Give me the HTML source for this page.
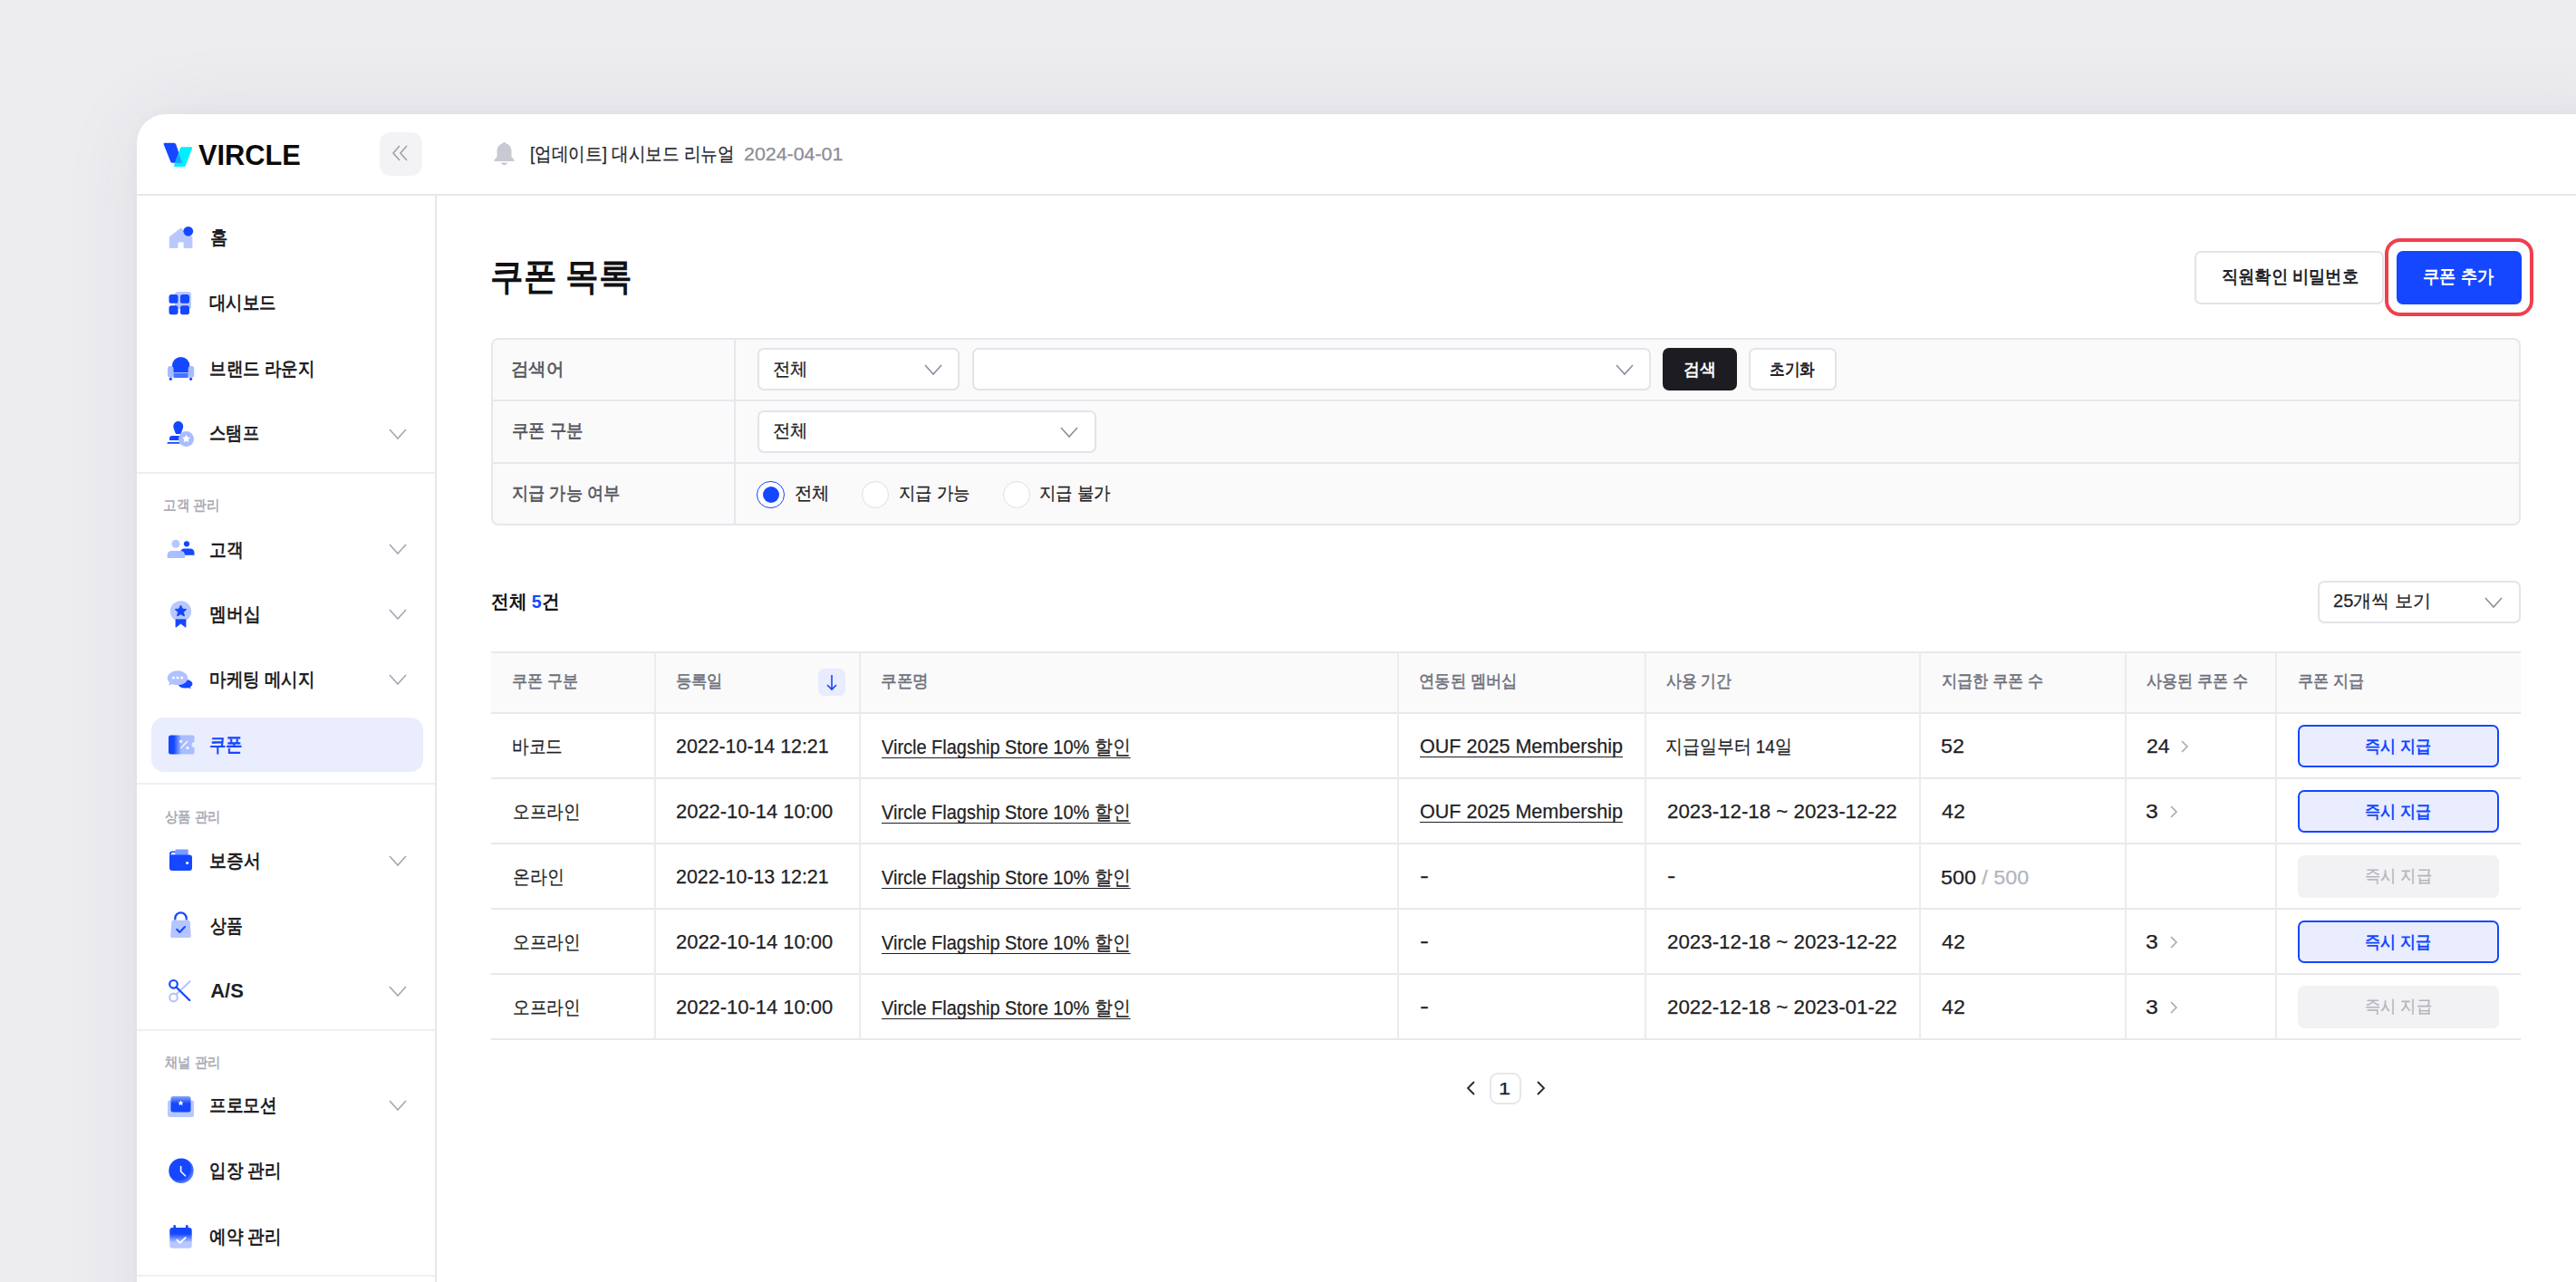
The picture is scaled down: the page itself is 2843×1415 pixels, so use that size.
<!DOCTYPE html><html><head><meta charset="utf-8"><style>html,body{margin:0;padding:0;}body{width:2843px;height:1415px;overflow:hidden;position:relative;background:#ededf0;font-family:"Liberation Sans",sans-serif;}.t{position:absolute;white-space:nowrap;line-height:1;transform-origin:0 0;}</style></head><body>
<div style="position:absolute;left:151px;top:125.5px;width:2760px;height:1400px;background:#fff;border-top-left-radius:32px;box-shadow:0 0 90px rgba(60,60,100,0.075), 0 0 16px rgba(60,60,100,0.03)"></div>
<div style="position:absolute;left:151px;top:213.5px;width:2700px;height:2px;background:#e7e7ed"></div>
<div style="position:absolute;left:479.5px;top:215px;width:2px;height:1210px;background:#e7e7ed"></div>
<div style="position:absolute;left:151px;top:521px;width:329px;height:2px;background:#efeff3"></div>
<div style="position:absolute;left:151px;top:864px;width:329px;height:2px;background:#efeff3"></div>
<div style="position:absolute;left:151px;top:1136px;width:329px;height:2px;background:#efeff3"></div>
<div style="position:absolute;left:151px;top:1407px;width:329px;height:2px;background:#efeff3"></div>
<div style="position:absolute;left:419px;top:145.5px;width:47px;height:48px;border-radius:12px;background:#f3f3f6"></div>
<svg style="position:absolute;left:430px;top:158px" width="24" height="24"><path d="M11 3 L4 11 L11 19 M19 3 L12 11 L19 19" fill="none" stroke="#9d9daa" stroke-width="1.5"/></svg>
<svg style="position:absolute;left:175px;top:150px" width="50" height="40" viewBox="0 0 50 40">
<path d="M6.8 7.8 L17 7.8 Q18.6 7.8 19.3 9.5 L26 29.7 L15 29.7 Q13.8 29.7 13.3 28.4 L5.6 9.3 Q5.2 7.8 6.8 7.8 Z" fill="#1447ff"/>
<path d="M25.8 12.3 L36 12.3 Q37.6 12.3 37 13.9 L29.8 32.8 Q29.4 34 28.2 34 L18 34 Q16.5 34 17 32.6 L23.6 14.2 Q24.3 12.3 25.8 12.3 Z" fill="#00efff"/>
<path d="M22.09 19.09 L26 29.7 L18.33 29.7 Z" fill="#1e9cff"/>
</svg>
<svg style="position:absolute;left:544px;top:156px" width="26" height="28" viewBox="0 0 26 28">
<path d="M12.5 1 C13.5 1 14 1.6 14 2.2 C18 3 20.5 6.5 20.5 11 L20.5 17 L23.5 20.5 C24 21.2 23.6 22 22.8 22 L2.2 22 C1.4 22 1 21.2 1.5 20.5 L4.5 17 L4.5 11 C4.5 6.5 7 3 11 2.2 C11 1.6 11.5 1 12.5 1 Z" fill="#c9c9d3"/>
<path d="M9 23.5 L16 23.5 C15.5 25.3 14.2 26.2 12.5 26.2 C10.8 26.2 9.5 25.3 9 23.5 Z" fill="#c9c9d3"/>
</svg>
<div style="position:absolute;left:166.5px;top:792px;width:300px;height:59.5px;border-radius:14px;background:#eaedfe"></div>
<svg style="position:absolute;left:428.4px;top:471.6px" width="22" height="14"><path d="M2 2 L11.0 12 L20 2" fill="none" stroke="#a5a5b5" stroke-width="1.6"/></svg>
<svg style="position:absolute;left:428.4px;top:599.4px" width="22" height="14"><path d="M2 2 L11.0 12 L20 2" fill="none" stroke="#a5a5b5" stroke-width="1.6"/></svg>
<svg style="position:absolute;left:428.4px;top:670.7px" width="22" height="14"><path d="M2 2 L11.0 12 L20 2" fill="none" stroke="#a5a5b5" stroke-width="1.6"/></svg>
<svg style="position:absolute;left:428.4px;top:743.0px" width="22" height="14"><path d="M2 2 L11.0 12 L20 2" fill="none" stroke="#a5a5b5" stroke-width="1.6"/></svg>
<svg style="position:absolute;left:428.4px;top:943.2px" width="22" height="14"><path d="M2 2 L11.0 12 L20 2" fill="none" stroke="#a5a5b5" stroke-width="1.6"/></svg>
<svg style="position:absolute;left:428.4px;top:1087.0px" width="22" height="14"><path d="M2 2 L11.0 12 L20 2" fill="none" stroke="#a5a5b5" stroke-width="1.6"/></svg>
<svg style="position:absolute;left:428.4px;top:1213.3px" width="22" height="14"><path d="M2 2 L11.0 12 L20 2" fill="none" stroke="#a5a5b5" stroke-width="1.6"/></svg>
<div style="position:absolute;left:2421.5px;top:276.5px;width:209px;height:59px;box-sizing:border-box;border:2px solid #e3e3e9;border-radius:7px;background:#fff"></div>
<div style="position:absolute;left:2631.5px;top:263px;width:164px;height:86px;box-sizing:border-box;border:4px solid #ef3f4e;border-radius:17px"></div>
<div style="position:absolute;left:2644.5px;top:276.5px;width:138px;height:59px;border-radius:7px;background:#1447ff"></div>
<div style="position:absolute;left:542px;top:373px;width:2240px;height:207px;box-sizing:border-box;border:2px solid #e7e7ed;border-radius:8px;background:#fafafb"></div>
<div style="position:absolute;left:543px;top:440.5px;width:2238px;height:2px;background:#e7e7ed"></div>
<div style="position:absolute;left:543px;top:509.5px;width:2238px;height:2px;background:#e7e7ed"></div>
<div style="position:absolute;left:809.5px;top:374px;width:2px;height:205px;background:#e7e7ed"></div>
<div style="position:absolute;left:835.8px;top:384.4px;width:223.60000000000014px;height:46.60000000000002px;box-sizing:border-box;border:2px solid #e3e3e9;border-radius:7px;background:#fff"></div>
<svg style="position:absolute;left:1019.0px;top:400.7px" width="22" height="14"><path d="M2 2 L11.0 12 L20 2" fill="none" stroke="#8e8e9c" stroke-width="1.6"/></svg>
<div style="position:absolute;left:1072.8px;top:384.4px;width:749.2px;height:46.60000000000002px;box-sizing:border-box;border:2px solid #e3e3e9;border-radius:7px;background:#fff"></div>
<svg style="position:absolute;left:1781.5px;top:400.7px" width="22" height="14"><path d="M2 2 L11.0 12 L20 2" fill="none" stroke="#8e8e9c" stroke-width="1.6"/></svg>
<div style="position:absolute;left:1834.5px;top:384.4px;width:82.29999999999995px;height:46.60000000000002px;box-sizing:border-box;border:2px solid #1c1c21;border-radius:7px;background:#1c1c21"></div>
<div style="position:absolute;left:1929.6px;top:384.4px;width:97.80000000000018px;height:46.60000000000002px;box-sizing:border-box;border:2px solid #e3e3e9;border-radius:7px;background:#fff"></div>
<div style="position:absolute;left:835.8px;top:453.4px;width:374.0px;height:46.400000000000034px;box-sizing:border-box;border:2px solid #e3e3e9;border-radius:7px;background:#fff"></div>
<svg style="position:absolute;left:1169.4px;top:469.6px" width="22" height="14"><path d="M2 2 L11.0 12 L20 2" fill="none" stroke="#8e8e9c" stroke-width="1.6"/></svg>
<div style="position:absolute;left:835.4px;top:530.7px;width:30.2px;height:30.2px;box-sizing:border-box;border:1.5px solid #1447ff;border-radius:50%;background:#fff"></div>
<div style="position:absolute;left:841.5px;top:536.8px;width:18px;height:18px;border-radius:50%;background:#1447ff"></div>
<div style="position:absolute;left:950.6999999999999px;top:530.7px;width:30.2px;height:30.2px;box-sizing:border-box;border:1.5px solid #dedee6;border-radius:50%;background:#fff"></div>
<div style="position:absolute;left:1106.6000000000001px;top:530.7px;width:30.2px;height:30.2px;box-sizing:border-box;border:1.5px solid #dedee6;border-radius:50%;background:#fff"></div>
<div style="position:absolute;left:2558px;top:641px;width:223.69999999999982px;height:47px;box-sizing:border-box;border:2px solid #e3e3e9;border-radius:7px;background:#fff"></div>
<svg style="position:absolute;left:2741.0px;top:657.5px" width="22" height="14"><path d="M2 2 L11.0 12 L20 2" fill="none" stroke="#8e8e9c" stroke-width="1.6"/></svg>
<div style="position:absolute;left:542px;top:719px;width:2240px;height:67.5px;background:#fafafb"></div>
<div style="position:absolute;left:542px;top:718.5px;width:2240px;height:2px;background:#e8e8ee"></div>
<div style="position:absolute;left:542px;top:785.5px;width:2240px;height:2px;background:#e8e8ee"></div>
<div style="position:absolute;left:542px;top:857.5px;width:2240px;height:2px;background:#e8e8ee"></div>
<div style="position:absolute;left:542px;top:929.5px;width:2240px;height:2px;background:#e8e8ee"></div>
<div style="position:absolute;left:542px;top:1001.5px;width:2240px;height:2px;background:#e8e8ee"></div>
<div style="position:absolute;left:542px;top:1073.5px;width:2240px;height:2px;background:#e8e8ee"></div>
<div style="position:absolute;left:542px;top:1145.5px;width:2240px;height:2px;background:#e8e8ee"></div>
<div style="position:absolute;left:721.5px;top:719px;width:2px;height:428px;background:#ebebf0"></div>
<div style="position:absolute;left:947.5px;top:719px;width:2px;height:428px;background:#ebebf0"></div>
<div style="position:absolute;left:1542px;top:719px;width:2px;height:428px;background:#ebebf0"></div>
<div style="position:absolute;left:1815px;top:719px;width:2px;height:428px;background:#ebebf0"></div>
<div style="position:absolute;left:2117.5px;top:719px;width:2px;height:428px;background:#ebebf0"></div>
<div style="position:absolute;left:2344.5px;top:719px;width:2px;height:428px;background:#ebebf0"></div>
<div style="position:absolute;left:2510.5px;top:719px;width:2px;height:428px;background:#ebebf0"></div>
<div style="position:absolute;left:903.3px;top:738.3px;width:29.4px;height:29.5px;border-radius:7px;background:#e8ecfe"></div>
<svg style="position:absolute;left:908px;top:742px" width="20" height="22"><path d="M10 3 L10 19 M5 14 L10 19 L15 14" fill="none" stroke="#1447ff" stroke-width="1.6"/></svg>
<div style="position:absolute;left:2536.4px;top:799.8px;width:221.5999999999999px;height:46.90000000000009px;box-sizing:border-box;border:2px solid #1447ff;border-radius:7px;background:#e9edfe"></div>
<div style="position:absolute;left:2536.4px;top:871.8px;width:221.5999999999999px;height:46.90000000000009px;box-sizing:border-box;border:2px solid #1447ff;border-radius:7px;background:#e9edfe"></div>
<div style="position:absolute;left:2536.4px;top:943.8px;width:221.5999999999999px;height:46.90000000000009px;box-sizing:border-box;border:2px solid #f2f2f5;border-radius:7px;background:#f2f2f5"></div>
<div style="position:absolute;left:2536.4px;top:1015.8px;width:221.5999999999999px;height:46.90000000000009px;box-sizing:border-box;border:2px solid #1447ff;border-radius:7px;background:#e9edfe"></div>
<div style="position:absolute;left:2536.4px;top:1087.8px;width:221.5999999999999px;height:46.90000000000009px;box-sizing:border-box;border:2px solid #f2f2f5;border-radius:7px;background:#f2f2f5"></div>
<svg style="position:absolute;left:2404.8px;top:815.5px" width="14" height="16"><path d="M3 2 L9 8 L3 14" fill="none" stroke="#a5a5b5" stroke-width="1.5"/></svg>
<svg style="position:absolute;left:2393px;top:887.5px" width="14" height="16"><path d="M3 2 L9 8 L3 14" fill="none" stroke="#a5a5b5" stroke-width="1.5"/></svg>
<svg style="position:absolute;left:2393px;top:1031.5px" width="14" height="16"><path d="M3 2 L9 8 L3 14" fill="none" stroke="#a5a5b5" stroke-width="1.5"/></svg>
<svg style="position:absolute;left:2393px;top:1103.5px" width="14" height="16"><path d="M3 2 L9 8 L3 14" fill="none" stroke="#a5a5b5" stroke-width="1.5"/></svg>
<div style="position:absolute;left:1644.3px;top:1183.7px;width:35.200000000000045px;height:35.59999999999991px;box-sizing:border-box;border:2px solid #e6e6ec;border-radius:9px;background:#fff"></div>
<svg style="position:absolute;left:1616px;top:1192px" width="14" height="18"><path d="M11 2 L4 9 L11 16" fill="none" stroke="#26262c" stroke-width="1.8"/></svg>
<svg style="position:absolute;left:1694px;top:1192px" width="14" height="18"><path d="M3 2 L10 9 L3 16" fill="none" stroke="#26262c" stroke-width="1.8"/></svg>
<svg style="position:absolute;left:180px;top:240px" width="40" height="40" viewBox="0 0 40 40"><path d="M7.2 21.5 L19.5 12 L32 21.5 L32 33.5 L23 33.5 L23 28 Q23 27 22 27 L17 27 Q16 27 16 28 L16 33.5 L7.2 33.5 Z" fill="#b8c8ff" stroke="#b8c8ff" stroke-width="0.8" stroke-linejoin="round"/><circle cx="27.8" cy="15.3" r="5.4" fill="#1447ff"/></svg>
<svg style="position:absolute;left:180px;top:315px" width="40" height="40" viewBox="0 0 40 40"><rect x="13" y="7" width="18" height="19" rx="3" fill="#b8c8ff"/><rect x="6.5" y="10" width="10" height="9.8" rx="2.6" fill="#1447ff"/><rect x="19" y="10" width="10" height="9.8" rx="2.6" fill="#1447ff"/><rect x="6.5" y="22.3" width="10" height="9.9" rx="2.6" fill="#1447ff"/><rect x="19" y="22.3" width="10" height="9.9" rx="2.6" fill="#1447ff"/></svg>
<svg style="position:absolute;left:180px;top:387px" width="40" height="40" viewBox="0 0 40 40"><path d="M10 24 L10 16.5 A9.65 9.5 0 0 1 29.3 16.5 L29.3 24 Z" fill="#1447ff"/><rect x="5" y="17" width="6.5" height="13" rx="3" fill="#a8bbff"/><rect x="27.7" y="17" width="6.5" height="13" rx="3" fill="#a8bbff"/><rect x="11.5" y="24.5" width="16.2" height="5.5" fill="#4672ff"/><circle cx="8.3" cy="31.3" r="1.6" fill="#1447ff"/><circle cx="30.6" cy="31.3" r="1.6" fill="#1447ff"/></svg>
<svg style="position:absolute;left:180px;top:458px" width="40" height="40" viewBox="0 0 40 40"><path d="M16.7 7 C20 7 22.2 9.5 22.2 12.5 C22.2 15 20.5 18 19.5 21 L14 21 C13 18 11.3 15 11.3 12.5 C11.3 9.5 13.5 7 16.7 7 Z" fill="#1447ff"/><path d="M7 28 L7 26 Q7 23 10 23 L18 23 L18 28 Z" fill="#1447ff"/><rect x="4.5" y="30" width="14" height="1.8" rx="0.9" fill="#1447ff"/><circle cx="25.5" cy="26.5" r="8.5" fill="#a9bcff"/><path d="M25.5 21.8 L26.9 24.6 L30 25 L27.8 27.1 L28.3 30.2 L25.5 28.7 L22.7 30.2 L23.2 27.1 L21 25 L24.1 24.6 Z" fill="#fff"/></svg>
<svg style="position:absolute;left:180px;top:586px" width="40" height="40" viewBox="0 0 40 40"><circle cx="14" cy="14.2" r="4.5" fill="#b8c8ff"/><circle cx="26" cy="14.3" r="3.1" fill="#1447ff"/><path d="M19 26.8 L19 24 Q19 19.5 24 19.5 L29.5 19.5 Q34.5 19.5 34.5 24.5 L34.5 26.8 Z" fill="#1447ff"/><path d="M4.7 30 L4.7 27 Q4.7 22 10 22 L19 22 Q24 22 24 27 L24 30 Z" fill="#aabdff"/></svg>
<svg style="position:absolute;left:180px;top:658px" width="40" height="40" viewBox="0 0 40 40"><circle cx="19.5" cy="16.8" r="11.6" fill="#b8c8ff"/><path d="M19.5 10 L21.4 14.1 L25.8 14.6 L22.5 17.6 L23.4 22 L19.5 19.8 L15.6 22 L16.5 17.6 L13.2 14.6 L17.6 14.1 Z" fill="#1447ff" stroke="#1447ff" stroke-width="1" stroke-linejoin="round"/><path d="M14 25.8 L25 25.8 L25 34.3 L19.5 30.3 L14 34.3 Z" fill="#1447ff" stroke="#1447ff" stroke-width="0.8" stroke-linejoin="round"/></svg>
<svg style="position:absolute;left:180px;top:730px" width="40" height="40" viewBox="0 0 40 40"><ellipse cx="24.5" cy="24.8" rx="8" ry="4.8" fill="#1447ff"/><path d="M29 27.5 L31 30 L27 29 Z" fill="#1447ff"/><ellipse cx="16" cy="18.3" rx="11.2" ry="8" fill="#b0c2ff"/><path d="M7.5 22.5 L6.3 26.8 L11 24.5 Z" fill="#b0c2ff"/><circle cx="11.5" cy="18" r="1.5" fill="#fff"/><circle cx="16" cy="18" r="1.5" fill="#fff"/><circle cx="20.7" cy="18" r="1.5" fill="#fff"/></svg>
<svg style="position:absolute;left:180px;top:802px" width="40" height="40" viewBox="0 0 40 40"><defs><linearGradient id="cg" x1="0" x2="1"><stop offset="0.2" stop-color="#1447ff"/><stop offset="0.5" stop-color="#a8bcff"/><stop offset="1" stop-color="#aabdff"/></linearGradient></defs><path d="M8.5 9.5 L32.5 9.5 Q34.5 9.5 34.5 11.5 L34.5 17 A3 3 0 0 0 34.5 23 L34.5 28.5 Q34.5 30.5 32.5 30.5 L8.5 30.5 Q6 30.5 6 28 L6 12 Q6 9.5 8.5 9.5 Z" fill="url(#cg)"/><circle cx="19.5" cy="16.2" r="1.5" fill="#fff"/><circle cx="27" cy="23.6" r="1.5" fill="#fff"/><path d="M19.6 23.6 L26.8 16.2" stroke="#fff" stroke-width="1.3" stroke-linecap="round"/></svg>
<svg style="position:absolute;left:180px;top:930px" width="40" height="40" viewBox="0 0 40 40"><rect x="13.5" y="7.5" width="14.2" height="7" fill="#7a9bff"/><path d="M7 12.5 Q7 9.5 10 9.5 L13.5 9.5 L13.5 13.5 L7 13.5 Z" fill="#1447ff"/><rect x="8.8" y="11" width="4.7" height="2.2" rx="1" fill="#fff"/><path d="M7 12.5 L7 28 Q7 31 10 31 L29 31 Q32 31 32 28 L32 16.5 Q32 13.5 29 13.5 L7 13.5 Z" fill="#1447ff"/><circle cx="26.6" cy="22.5" r="1.6" fill="#fff"/></svg>
<svg style="position:absolute;left:180px;top:1002px" width="40" height="40" viewBox="0 0 40 40"><path d="M13.3 13.5 L13.3 11.5 A6.2 6.2 0 0 1 25.7 11.5 L25.7 13.5" fill="none" stroke="#1447ff" stroke-width="2.2"/><path d="M11.5 13.7 L27.7 13.7 Q29.6 13.7 29.7 15.6 L30.8 31 Q30.9 33 28.9 33 L10.1 33 Q8.1 33 8.2 31 L9.4 15.6 Q9.5 13.7 11.5 13.7 Z" fill="#b4c5ff"/><path d="M15.2 23.8 L18.3 27 L24 21" fill="none" stroke="#1447ff" stroke-width="2" stroke-linecap="round" stroke-linejoin="round"/></svg>
<svg style="position:absolute;left:180px;top:1074px" width="40" height="40" viewBox="0 0 40 40"><path d="M29.5 9.3 L15 23" stroke="#b4c5ff" stroke-width="2.2" stroke-linecap="round"/><circle cx="11.5" cy="27" r="4.3" fill="none" stroke="#b4c5ff" stroke-width="2.2"/><circle cx="11.5" cy="12.3" r="4.3" fill="none" stroke="#1447ff" stroke-width="2.2"/><path d="M14.5 15.5 L29.2 30" stroke="#1447ff" stroke-width="2.3" stroke-linecap="round"/></svg>
<svg style="position:absolute;left:180px;top:1200px" width="40" height="40" viewBox="0 0 40 40"><defs><linearGradient id="pg" x1="0" y1="0" x2="0" y2="1"><stop offset="0" stop-color="#8ba6ff"/><stop offset="0.45" stop-color="#1447ff"/><stop offset="1" stop-color="#1447ff"/></linearGradient></defs><rect x="5" y="14.5" width="29" height="18.5" rx="2.2" fill="#b8c8ff"/><rect x="8.5" y="10" width="22" height="17.5" rx="2.5" fill="url(#pg)"/><path d="M19.5 14.5 L20.5 16.5 L22.6 16.7 L21 18.1 L21.5 20.2 L19.5 19.1 L17.5 20.2 L18 18.1 L16.4 16.7 L18.5 16.5 Z" fill="#fff"/></svg>
<svg style="position:absolute;left:180px;top:1272px" width="40" height="40" viewBox="0 0 40 40"><defs><radialGradient id="kg" cx="0.4" cy="0.4" r="0.75"><stop offset="0.6" stop-color="#1447ff"/><stop offset="1" stop-color="#9ab0ff"/></radialGradient></defs><circle cx="20" cy="20.3" r="13.7" fill="url(#kg)"/><path d="M19.6 15.6 L19.6 21 L24.5 25.8" fill="none" stroke="#fff" stroke-width="1.6" stroke-linecap="round" stroke-linejoin="round"/></svg>
<svg style="position:absolute;left:180px;top:1345px" width="40" height="40" viewBox="0 0 40 40"><defs><linearGradient id="lg" x1="0" y1="0" x2="0" y2="1"><stop offset="0.3" stop-color="#1447ff"/><stop offset="0.72" stop-color="#b8c8ff"/></linearGradient></defs><rect x="7.3" y="10" width="24.4" height="22.7" rx="3" fill="url(#lg)"/><rect x="11.4" y="7" width="2.6" height="4" rx="1.3" fill="#1447ff"/><rect x="25" y="7" width="2.6" height="4" rx="1.3" fill="#1447ff"/><path d="M15.2 23.5 L18.7 26.8 L24.8 21" fill="none" stroke="#fff" stroke-width="1.8" stroke-linecap="round" stroke-linejoin="round"/></svg>
<div id="t0" class="t" style="left:219.40px;top:156.00px;font-size:31px;font-weight:700;color:#0a0a0a;transform:scaleX(0.9929);">VIRCLE</div>
<div id="t1" class="t" style="left:584.79px;top:158.80px;font-size:21px;font-weight:400;color:#25252b;transform:scaleX(0.8864);-webkit-text-stroke:0.25px currentColor;">[업데이트] 대시보드 리뉴얼</div>
<div id="t2" class="t" style="left:821.23px;top:160.20px;font-size:20px;font-weight:400;color:#8c8c98;transform:scaleX(1.0695);-webkit-text-stroke:0.25px currentColor;">2024-04-01</div>
<div id="t3" class="t" style="left:232.27px;top:251.00px;font-size:21px;font-weight:700;color:#1f1f25;transform:scaleX(0.9218);">홈</div>
<div id="t4" class="t" style="left:231.35px;top:323.40px;font-size:21px;font-weight:700;color:#1f1f25;transform:scaleX(0.8780);">대시보드</div>
<div id="t5" class="t" style="left:231.34px;top:396.00px;font-size:21px;font-weight:700;color:#1f1f25;transform:scaleX(0.8836);">브랜드 라운지</div>
<div id="t6" class="t" style="left:231.36px;top:467.40px;font-size:21px;font-weight:700;color:#1f1f25;transform:scaleX(0.8692);">스탬프</div>
<div id="t7" class="t" style="left:231.32px;top:595.60px;font-size:21px;font-weight:700;color:#1f1f25;transform:scaleX(0.8974);">고객</div>
<div id="t8" class="t" style="left:231.41px;top:666.80px;font-size:21px;font-weight:700;color:#1f1f25;transform:scaleX(0.8969);">멤버십</div>
<div id="t9" class="t" style="left:231.34px;top:739.00px;font-size:21px;font-weight:700;color:#1f1f25;transform:scaleX(0.8836);">마케팅 메시지</div>
<div id="t10" class="t" style="left:231.35px;top:811.20px;font-size:21px;font-weight:700;color:#1447ff;transform:scaleX(0.8750);">쿠폰</div>
<div id="t11" class="t" style="left:231.32px;top:938.80px;font-size:21px;font-weight:700;color:#1f1f25;transform:scaleX(0.8983);">보증서</div>
<div id="t12" class="t" style="left:232.36px;top:1011.20px;font-size:21px;font-weight:700;color:#1f1f25;transform:scaleX(0.8507);">상품</div>
<div id="t13" class="t" style="left:232.20px;top:1083.00px;font-size:22px;font-weight:700;color:#1f1f25;transform:scaleX(1.0000);">A/S</div>
<div id="t14" class="t" style="left:231.33px;top:1209.20px;font-size:21px;font-weight:700;color:#1f1f25;transform:scaleX(0.8889);">프로모션</div>
<div id="t15" class="t" style="left:231.34px;top:1281.40px;font-size:21px;font-weight:700;color:#1f1f25;transform:scaleX(0.8837);">입장 관리</div>
<div id="t16" class="t" style="left:231.34px;top:1354.00px;font-size:21px;font-weight:700;color:#1f1f25;transform:scaleX(0.8837);">예약 관리</div>
<div id="t17" class="t" style="left:180.31px;top:550.40px;font-size:16px;font-weight:700;color:#acacb6;transform:scaleX(0.9093);">고객 관리</div>
<div id="t18" class="t" style="left:182.22px;top:894.20px;font-size:16px;font-weight:700;color:#acacb6;transform:scaleX(0.8955);">상품 관리</div>
<div id="t19" class="t" style="left:182.22px;top:1165.20px;font-size:16px;font-weight:700;color:#acacb6;transform:scaleX(0.8955);">채널 관리</div>
<div id="t20" class="t" style="left:540.77px;top:285.00px;font-size:41px;font-weight:700;color:#111114;transform:scaleX(0.8920);">쿠폰 목록</div>
<div id="t21" class="t" style="left:2451.65px;top:295.40px;font-size:20px;font-weight:700;color:#222228;transform:scaleX(0.9110);">직원확인 비밀번호</div>
<div id="t22" class="t" style="left:2674.30px;top:295.40px;font-size:20px;font-weight:700;color:#ffffff;transform:scaleX(0.9120);">쿠폰 추가</div>
<div id="t23" class="t" style="left:564.05px;top:396.60px;font-size:20px;font-weight:400;color:#55555d;transform:scaleX(0.9749);-webkit-text-stroke:0.6px #55555d">검색어</div>
<div id="t24" class="t" style="left:565.08px;top:465.20px;font-size:20px;font-weight:400;color:#55555d;transform:scaleX(0.9204);-webkit-text-stroke:0.6px #55555d">쿠폰 구분</div>
<div id="t25" class="t" style="left:565.17px;top:534.00px;font-size:20px;font-weight:400;color:#55555d;transform:scaleX(0.9102);-webkit-text-stroke:0.6px #55555d">지급 가능 여부</div>
<div id="t26" class="t" style="left:853.03px;top:396.60px;font-size:20px;font-weight:400;color:#1f1f25;transform:scaleX(0.9722);-webkit-text-stroke:0.25px currentColor;">전체</div>
<div id="t27" class="t" style="left:853.03px;top:465.20px;font-size:20px;font-weight:400;color:#1f1f25;transform:scaleX(0.9722);-webkit-text-stroke:0.25px currentColor;">전체</div>
<div id="t28" class="t" style="left:1858.06px;top:397.60px;font-size:19px;font-weight:700;color:#ffffff;transform:scaleX(0.9429);">검색</div>
<div id="t29" class="t" style="left:1952.57px;top:397.60px;font-size:19px;font-weight:700;color:#222228;transform:scaleX(0.8769);">초기화</div>
<div id="t30" class="t" style="left:876.84px;top:534.00px;font-size:20px;font-weight:400;color:#1f1f25;transform:scaleX(0.9722);-webkit-text-stroke:0.25px currentColor;">전체</div>
<div id="t31" class="t" style="left:991.94px;top:534.00px;font-size:20px;font-weight:400;color:#1f1f25;transform:scaleX(0.9205);-webkit-text-stroke:0.25px currentColor;">지급 가능</div>
<div id="t32" class="t" style="left:1147.36px;top:534.00px;font-size:20px;font-weight:400;color:#1f1f25;transform:scaleX(0.9218);-webkit-text-stroke:0.25px currentColor;">지급 불가</div>
<div id="t33" class="t" style="left:541.64px;top:653.00px;font-size:21px;font-weight:700;color:#111114;transform:scaleX(0.9359);">전체 <span style="color:#1447ff">5</span>건</div>
<div id="t34" class="t" style="left:2575.00px;top:653.00px;font-size:20px;font-weight:400;color:#1f1f25;transform:scaleX(1.0039);-webkit-text-stroke:0.25px currentColor;">25개씩 보기</div>
<div id="t35" class="t" style="left:565.10px;top:742.00px;font-size:19px;font-weight:400;color:#70727c;transform:scaleX(0.8987);-webkit-text-stroke:0.55px #70727c">쿠폰 구분</div>
<div id="t36" class="t" style="left:746.26px;top:742.00px;font-size:19px;font-weight:400;color:#70727c;transform:scaleX(0.9078);-webkit-text-stroke:0.55px #70727c">등록일</div>
<div id="t37" class="t" style="left:972.11px;top:742.00px;font-size:19px;font-weight:400;color:#70727c;transform:scaleX(0.9245);-webkit-text-stroke:0.55px #70727c">쿠폰명</div>
<div id="t38" class="t" style="left:1566.18px;top:742.00px;font-size:19px;font-weight:400;color:#70727c;transform:scaleX(0.9123);-webkit-text-stroke:0.55px #70727c">연동된 멤버십</div>
<div id="t39" class="t" style="left:1839.33px;top:742.00px;font-size:19px;font-weight:400;color:#70727c;transform:scaleX(0.8875);-webkit-text-stroke:0.55px #70727c">사용 기간</div>
<div id="t40" class="t" style="left:2142.62px;top:742.00px;font-size:19px;font-weight:400;color:#70727c;transform:scaleX(0.9009);-webkit-text-stroke:0.55px #70727c">지급한 쿠폰 수</div>
<div id="t41" class="t" style="left:2368.71px;top:742.00px;font-size:19px;font-weight:400;color:#70727c;transform:scaleX(0.9016);-webkit-text-stroke:0.55px #70727c">사용된 쿠폰 수</div>
<div id="t42" class="t" style="left:2535.65px;top:742.00px;font-size:19px;font-weight:400;color:#70727c;transform:scaleX(0.9002);-webkit-text-stroke:0.55px #70727c">쿠폰 지급</div>
<div id="t43" class="t" style="left:564.78px;top:813.00px;font-size:21px;font-weight:400;color:#1f1f25;transform:scaleX(0.8851);-webkit-text-stroke:0.25px currentColor;">바코드</div>
<div id="t44" class="t" style="left:746.04px;top:813.00px;font-size:22px;font-weight:400;color:#1f1f25;transform:scaleX(0.9708);-webkit-text-stroke:0.25px currentColor;">2022-10-14 12:21</div>
<div id="t45" class="t" style="left:973.04px;top:814.40px;font-size:22px;font-weight:400;color:#1f1f25;transform:scaleX(0.9071);-webkit-text-stroke:0.25px currentColor;text-decoration:underline;text-underline-offset:4px;text-decoration-thickness:1px">Vircle Flagship Store 10% 할인</div>
<div id="t46" class="t" style="left:1567.02px;top:813.40px;font-size:22px;font-weight:400;color:#1f1f25;transform:scaleX(0.9797);-webkit-text-stroke:0.25px currentColor;text-decoration:underline;text-underline-offset:4px;text-decoration-thickness:1px">OUF 2025 Membership</div>
<div id="t47" class="t" style="left:1838.42px;top:813.00px;font-size:21px;font-weight:400;color:#1f1f25;transform:scaleX(0.9000);-webkit-text-stroke:0.25px currentColor;">지급일부터 14일</div>
<div id="t48" class="t" style="left:2142.30px;top:813.00px;font-size:22px;font-weight:400;color:#1f1f25;transform:scaleX(1.0565);-webkit-text-stroke:0.25px currentColor;">52</div>
<div id="t49" class="t" style="left:2368.55px;top:813.00px;font-size:22px;font-weight:400;color:#1f1f25;transform:scaleX(1.0435);-webkit-text-stroke:0.25px currentColor;">24</div>
<div id="t50" class="t" style="left:2610.27px;top:814.20px;font-size:19px;font-weight:700;color:#1447ff;transform:scaleX(0.8964);">즉시 지급</div>
<div id="t51" class="t" style="left:565.78px;top:885.00px;font-size:21px;font-weight:400;color:#1f1f25;transform:scaleX(0.8866);-webkit-text-stroke:0.25px currentColor;">오프라인</div>
<div id="t52" class="t" style="left:746.00px;top:885.00px;font-size:22px;font-weight:400;color:#1f1f25;transform:scaleX(0.9971);-webkit-text-stroke:0.25px currentColor;">2022-10-14 10:00</div>
<div id="t53" class="t" style="left:973.04px;top:886.40px;font-size:22px;font-weight:400;color:#1f1f25;transform:scaleX(0.9071);-webkit-text-stroke:0.25px currentColor;text-decoration:underline;text-underline-offset:4px;text-decoration-thickness:1px">Vircle Flagship Store 10% 할인</div>
<div id="t54" class="t" style="left:1567.02px;top:885.40px;font-size:22px;font-weight:400;color:#1f1f25;transform:scaleX(0.9797);-webkit-text-stroke:0.25px currentColor;text-decoration:underline;text-underline-offset:4px;text-decoration-thickness:1px">OUF 2025 Membership</div>
<div id="t55" class="t" style="left:1840.18px;top:885.00px;font-size:22px;font-weight:400;color:#1f1f25;transform:scaleX(1.0141);-webkit-text-stroke:0.25px currentColor;">2023-12-18 ~ 2023-12-22</div>
<div id="t56" class="t" style="left:2143.37px;top:885.00px;font-size:22px;font-weight:400;color:#1f1f25;transform:scaleX(1.0527);-webkit-text-stroke:0.25px currentColor;">42</div>
<div id="t57" class="t" style="left:2368.47px;top:885.00px;font-size:22px;font-weight:400;color:#1f1f25;transform:scaleX(1.1282);-webkit-text-stroke:0.25px currentColor;">3</div>
<div id="t58" class="t" style="left:2610.27px;top:886.20px;font-size:19px;font-weight:700;color:#1447ff;transform:scaleX(0.8964);">즉시 지급</div>
<div id="t59" class="t" style="left:565.66px;top:957.00px;font-size:21px;font-weight:400;color:#1f1f25;transform:scaleX(0.9001);-webkit-text-stroke:0.25px currentColor;">온라인</div>
<div id="t60" class="t" style="left:746.04px;top:957.00px;font-size:22px;font-weight:400;color:#1f1f25;transform:scaleX(0.9708);-webkit-text-stroke:0.25px currentColor;">2022-10-13 12:21</div>
<div id="t61" class="t" style="left:973.04px;top:958.40px;font-size:22px;font-weight:400;color:#1f1f25;transform:scaleX(0.9071);-webkit-text-stroke:0.25px currentColor;text-decoration:underline;text-underline-offset:4px;text-decoration-thickness:1px">Vircle Flagship Store 10% 할인</div>
<div id="t62" class="t" style="left:1566.64px;top:956.20px;font-size:22px;font-weight:400;color:#1f1f25;transform:scaleX(1.3587);-webkit-text-stroke:0.25px currentColor;">-</div>
<div id="t63" class="t" style="left:1839.74px;top:956.20px;font-size:22px;font-weight:400;color:#1f1f25;transform:scaleX(1.2681);-webkit-text-stroke:0.25px currentColor;">-</div>
<div id="t64" class="t" style="left:2142.32px;top:958.00px;font-size:22px;font-weight:400;color:#1f1f25;transform:scaleX(1.0589);-webkit-text-stroke:0.25px currentColor;">500 <span style="color:#b4b4be">/ 500</span></div>
<div id="t65" class="t" style="left:2610.26px;top:957.20px;font-size:19px;font-weight:400;color:#b2b2bc;transform:scaleX(0.9089);-webkit-text-stroke:0.25px currentColor;">즉시 지급</div>
<div id="t66" class="t" style="left:565.78px;top:1029.00px;font-size:21px;font-weight:400;color:#1f1f25;transform:scaleX(0.8866);-webkit-text-stroke:0.25px currentColor;">오프라인</div>
<div id="t67" class="t" style="left:746.00px;top:1029.00px;font-size:22px;font-weight:400;color:#1f1f25;transform:scaleX(0.9971);-webkit-text-stroke:0.25px currentColor;">2022-10-14 10:00</div>
<div id="t68" class="t" style="left:973.04px;top:1030.40px;font-size:22px;font-weight:400;color:#1f1f25;transform:scaleX(0.9071);-webkit-text-stroke:0.25px currentColor;text-decoration:underline;text-underline-offset:4px;text-decoration-thickness:1px">Vircle Flagship Store 10% 할인</div>
<div id="t69" class="t" style="left:1566.64px;top:1028.20px;font-size:22px;font-weight:400;color:#1f1f25;transform:scaleX(1.3587);-webkit-text-stroke:0.25px currentColor;">-</div>
<div id="t70" class="t" style="left:1840.18px;top:1029.00px;font-size:22px;font-weight:400;color:#1f1f25;transform:scaleX(1.0141);-webkit-text-stroke:0.25px currentColor;">2023-12-18 ~ 2023-12-22</div>
<div id="t71" class="t" style="left:2143.37px;top:1029.00px;font-size:22px;font-weight:400;color:#1f1f25;transform:scaleX(1.0527);-webkit-text-stroke:0.25px currentColor;">42</div>
<div id="t72" class="t" style="left:2368.47px;top:1029.00px;font-size:22px;font-weight:400;color:#1f1f25;transform:scaleX(1.1282);-webkit-text-stroke:0.25px currentColor;">3</div>
<div id="t73" class="t" style="left:2610.27px;top:1030.20px;font-size:19px;font-weight:700;color:#1447ff;transform:scaleX(0.8964);">즉시 지급</div>
<div id="t74" class="t" style="left:565.78px;top:1101.00px;font-size:21px;font-weight:400;color:#1f1f25;transform:scaleX(0.8866);-webkit-text-stroke:0.25px currentColor;">오프라인</div>
<div id="t75" class="t" style="left:746.00px;top:1101.00px;font-size:22px;font-weight:400;color:#1f1f25;transform:scaleX(0.9971);-webkit-text-stroke:0.25px currentColor;">2022-10-14 10:00</div>
<div id="t76" class="t" style="left:973.04px;top:1102.40px;font-size:22px;font-weight:400;color:#1f1f25;transform:scaleX(0.9071);-webkit-text-stroke:0.25px currentColor;text-decoration:underline;text-underline-offset:4px;text-decoration-thickness:1px">Vircle Flagship Store 10% 할인</div>
<div id="t77" class="t" style="left:1566.64px;top:1100.20px;font-size:22px;font-weight:400;color:#1f1f25;transform:scaleX(1.3587);-webkit-text-stroke:0.25px currentColor;">-</div>
<div id="t78" class="t" style="left:1840.18px;top:1101.00px;font-size:22px;font-weight:400;color:#1f1f25;transform:scaleX(1.0141);-webkit-text-stroke:0.25px currentColor;">2022-12-18 ~ 2023-01-22</div>
<div id="t79" class="t" style="left:2143.37px;top:1101.00px;font-size:22px;font-weight:400;color:#1f1f25;transform:scaleX(1.0527);-webkit-text-stroke:0.25px currentColor;">42</div>
<div id="t80" class="t" style="left:2368.47px;top:1101.00px;font-size:22px;font-weight:400;color:#1f1f25;transform:scaleX(1.1282);-webkit-text-stroke:0.25px currentColor;">3</div>
<div id="t81" class="t" style="left:2610.26px;top:1101.20px;font-size:19px;font-weight:400;color:#b2b2bc;transform:scaleX(0.9089);-webkit-text-stroke:0.25px currentColor;">즉시 지급</div>
<div id="t82" class="t" style="left:1653.65px;top:1192.00px;font-size:19px;font-weight:400;color:#1f1f25;transform:scaleX(1.2346);-webkit-text-stroke:0.25px currentColor;">1</div>
</body></html>
